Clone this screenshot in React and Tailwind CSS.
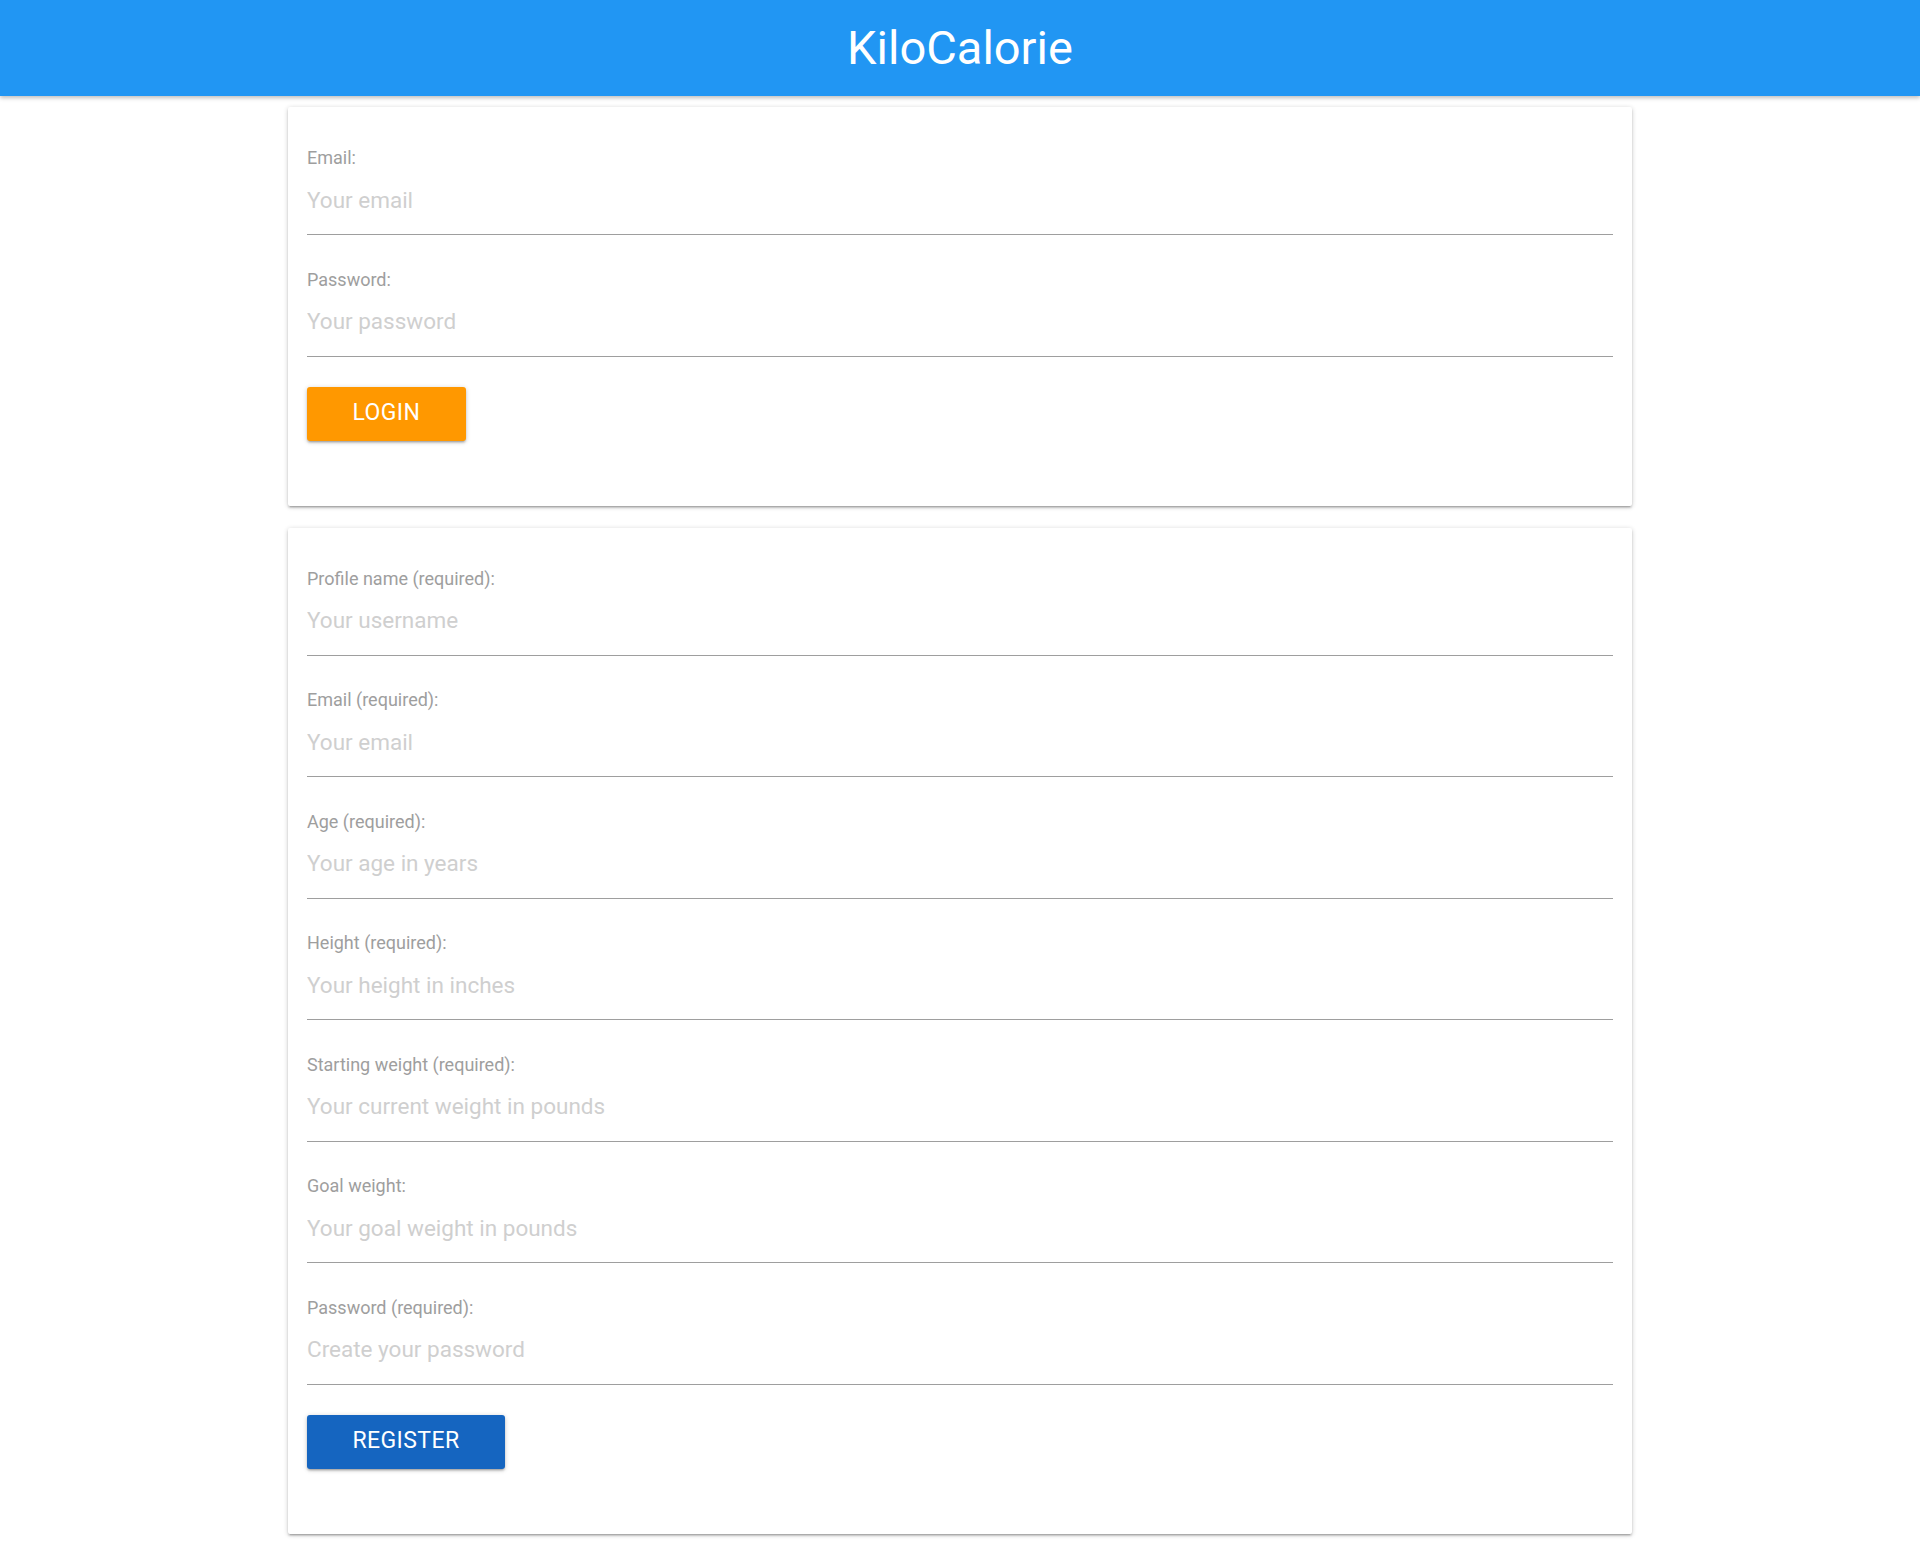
import { useState } from 'react'

const loginFields = [
  { label: 'Email:', placeholder: 'Your email', type: 'email' },
  { label: 'Password:', placeholder: 'Your password', type: 'password' },
]

const registerFields = [
  { label: 'Profile name (required):', placeholder: 'Your username', type: 'text' },
  { label: 'Email (required):', placeholder: 'Your email', type: 'email' },
  { label: 'Age (required):', placeholder: 'Your age in years', type: 'number' },
  { label: 'Height (required):', placeholder: 'Your height in inches', type: 'number' },
  { label: 'Starting weight (required):', placeholder: 'Your current weight in pounds', type: 'number' },
  { label: 'Goal weight:', placeholder: 'Your goal weight in pounds', type: 'number' },
  { label: 'Password (required):', placeholder: 'Create your password', type: 'password' },
]

function Field({ label, placeholder, type }) {
  const [value, setValue] = useState('')
  return (
    <label className="block">
      <span className="block h-6 text-[18px] leading-6 text-[#9e9e9e]">{label}</span>
      <input
        type={type}
        value={value}
        onChange={(e) => setValue(e.target.value)}
        placeholder={placeholder}
        className="block w-full h-[65px] pb-[5px] border-b border-[#9e9e9e] bg-transparent text-[22.5px] text-[#212121] outline-none placeholder:text-[#cfcfcf] [appearance:textfield]"
      />
    </label>
  )
}

function Card({ fields, button, color }) {
  return (
    <div className="bg-white rounded-[2px] px-[19px] pt-[39px] pb-[65px] shadow-[0_2px_2px_0_rgba(0,0,0,0.14),0_3px_1px_-2px_rgba(0,0,0,0.12),0_1px_5px_0_rgba(0,0,0,0.2)]">
      <div className="flex flex-col gap-[32.5px]">
        {fields.map((f) => (
          <Field key={f.label} {...f} />
        ))}
      </div>
      <button
        className={`mt-[30px] h-[54px] px-[45.5px] rounded-[3px] text-white text-[23px] tracking-[0.4px] uppercase shadow-[0_2px_2px_0_rgba(0,0,0,0.14),0_3px_1px_-2px_rgba(0,0,0,0.12),0_1px_5px_0_rgba(0,0,0,0.2)] ${color}`}
      >
        {button}
      </button>
    </div>
  )
}

export default function App() {
  return (
    <div className="min-h-screen bg-white font-['Roboto',sans-serif]">
      <header className="h-[96px] bg-[#2196f3] flex items-center justify-center shadow-[0_2px_4px_0_rgba(0,0,0,0.25)]">
        <h1 className="text-white text-[47px] font-normal">KiloCalorie</h1>
      </header>

      <main className="w-[70%] mx-auto pt-[11px] pb-6 flex flex-col gap-[22px]">
        <Card fields={loginFields} button="Login" color="bg-[#ff9800]" />
        <Card fields={registerFields} button="Register" color="bg-[#1565c0]" />
      </main>
    </div>
  )
}
